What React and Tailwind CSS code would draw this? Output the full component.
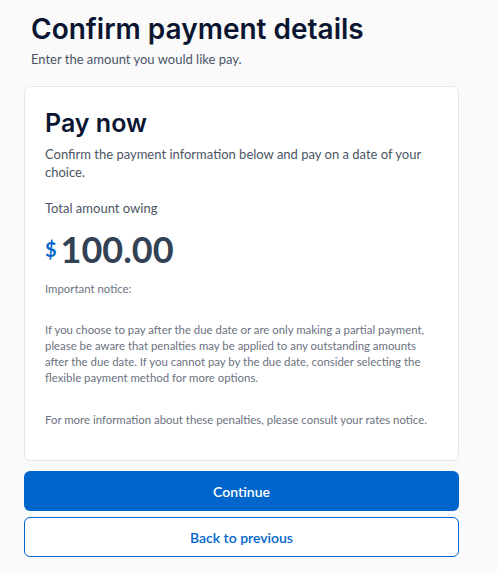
export default function App() {
  const body = { fontFamily: "Lato, 'Noto Sans', sans-serif" };
  const head = { fontFamily: "Inter, 'Noto Sans', sans-serif" };
  return (
    <div className="min-h-screen bg-[#fafafa]" style={body}>
      <div className="ml-[24px] w-[435px] pt-[12px]">
        {/* Header */}
        <div className="px-[7px]">
          <h1 className="text-[28px] leading-[34px] font-semibold text-[#0a1631]" style={head}>
            Confirm payment details
          </h1>
          <p className="mt-[4px] text-[13px] leading-[18px] text-[#4a5568]">
            Enter the amount you would like pay.
          </p>
        </div>

        {/* Card */}
        <div className="mt-[18px] bg-white border border-[#e5e7eb] rounded-md px-[20px] pt-[20px] pb-[32px]">
          <h2 className="text-[25px] leading-[32px] font-semibold text-[#0a1631]" style={head}>
            Pay now
          </h2>
          <p className="mt-[6px] text-[13px] leading-[18px] text-[#4b5563]">
            Confirm the payment information below and pay on a date of your choice.
          </p>
          <p className="mt-[18px] text-[13px] leading-[18px] text-[#4b5563]">
            Total amount owing
          </p>
          <div className="mt-[10px] flex items-center gap-[4px]">
            <span className="text-[20px] leading-[24px] font-bold text-[#0066cc]">$</span>
            <span className="text-[36px] leading-[44px] font-bold text-[#334155]">100.00</span>
          </div>
          <p className="mt-[10px] text-[11.4px] leading-[16px] text-[#6b7280]">Important notice:</p>
          <p className="mt-[25px] text-[11.4px] leading-[16px] text-[#6b7280]">
            If you choose to pay after the due date or are only making a partial payment, please be
            aware that penalties may be applied to any outstanding amounts after the due date. If you
            cannot pay by the due date, consider selecting the flexible payment method for more options.
          </p>
          <p className="mt-[26px] text-[11.4px] leading-[16px] text-[#6b7280]">
            For more information about these penalties, please consult your rates notice.
          </p>
        </div>

        {/* Actions */}
        <div className="mt-[10px] flex flex-col gap-[6px]">
          <button className="h-[40px] w-full rounded-md bg-[#0066cc] text-white text-[14px] font-semibold">
            Continue
          </button>
          <button className="h-[40px] w-full rounded-md border border-[#0066cc] bg-white text-[#0066cc] text-[14px] font-semibold">
            Back to previous
          </button>
        </div>
      </div>
    </div>
  );
}
